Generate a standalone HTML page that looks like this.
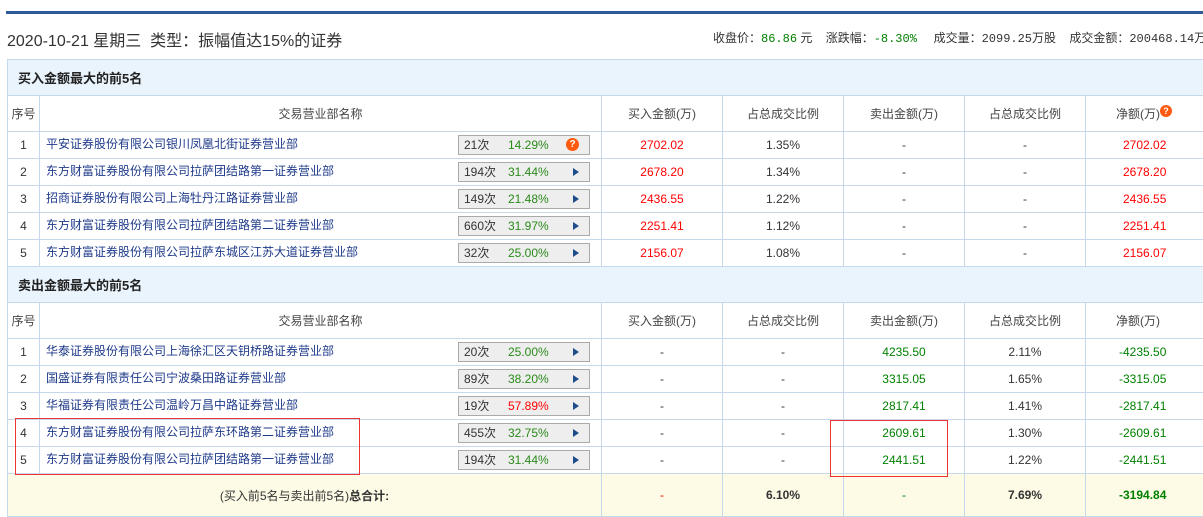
<!DOCTYPE html>
<html><head><meta charset="utf-8"><style>
body{margin:0;width:1203px;height:516px;overflow:hidden;background:#fff;font-family:"Liberation Sans","Noto Sans CJK SC",sans-serif;font-size:12px;color:#333;position:relative}
.topline{position:absolute;left:6px;top:11px;width:1197px;height:3px;background:#2f5a9a}
.title{position:absolute;left:7px;top:27px;font-size:16px;color:#333}
.info{position:absolute;left:713px;top:29px;font-size:12px;color:#333;white-space:nowrap}
.info b{font-weight:normal;color:#008000;font-family:"Liberation Mono",monospace}
.info i{font-style:normal;font-family:"Liberation Mono",monospace}
table{position:absolute;left:7px;border-collapse:collapse;table-layout:fixed;width:1210px}
td{border:1px solid #c5d9ea;text-align:center;padding:0;white-space:nowrap;overflow:hidden}
.sec td{background:#eaf4fd;text-align:left;font-weight:bold;font-size:13px;padding-left:10px;color:#222}
.hd td{height:35px;color:#444}
.r td{height:26px}
.nm{text-align:left;padding-left:6px;color:#1e3a8a;position:relative}
.nm .t{position:relative;top:-2px}
.btn{position:absolute;left:418px;top:3px;width:130px;height:18px;border:1px solid #aaa;background:#eee;color:#333;text-align:left;line-height:18px;font-size:12px}
.btn .c{display:inline-block;width:44px;padding-left:5px}
.btn .p{color:#2a8a1a}
.btn .a{position:absolute;right:10px;top:5px;width:0;height:0;border-left:6px solid #1e4d8a;border-top:4px solid transparent;border-bottom:4px solid transparent}
.btn .q{position:absolute;right:10px;top:2px;width:13px;height:13px;border-radius:50%;background:#ff5a0f;color:#fff;font-size:10px;font-weight:bold;text-align:center;line-height:13px}
.red{color:#f00}.grn{color:#008000}
.tot td{background:#fdfbe5;height:42px;color:#333}
.tot td.red{color:#f00}.tot td.grn{color:#008000}
</style></head><body>
<div class="topline"></div>
<div class="title">2020-10-21 星期三&nbsp; 类型：振幅值达15%的证券</div>
<div class="info">收盘价：<b>86.86</b> 元&nbsp;&nbsp;&nbsp; 涨跌幅：<b>-8.30%</b>&nbsp;&nbsp;&nbsp;&nbsp; 成交量：<i>2099.25</i>万股&nbsp;&nbsp;&nbsp; 成交金额：<i>200468.14</i>万元</div>
<table style="top:59px">
<colgroup><col style="width:32px"><col style="width:562px"><col style="width:121px"><col style="width:121px"><col style="width:121px"><col style="width:121px"><col style="width:132px"></colgroup>
<tr class="sec"><td colspan="7" style="height:35px">买入金额最大的前5名</td></tr>
<tr class="hd"><td>序号</td><td>交易营业部名称</td><td>买入金额(万)</td><td>占总成交比例</td><td>卖出金额(万)</td><td>占总成交比例</td><td style="text-align:left;padding-left:30px">净额(万)<span style="display:inline-block;width:12px;height:12px;border-radius:50%;background:#ff5a0f;color:#fff;font-size:9px;font-weight:bold;line-height:12px;text-align:center;vertical-align:top">?</span></td></tr>
<tr class="r"><td>1</td><td class="nm"><span class="t">平安证券股份有限公司银川凤凰北街证券营业部</span><div class="btn"><span class="c">21次</span><span class="p">14.29%</span><span class="q">?</span></div></td><td class="red">2702.02</td><td>1.35%</td><td>-</td><td>-</td><td class="red" style="text-align:left;padding-left:37px">2702.02</td></tr>
<tr class="r"><td>2</td><td class="nm"><span class="t">东方财富证券股份有限公司拉萨团结路第一证券营业部</span><div class="btn"><span class="c">194次</span><span class="p">31.44%</span><span class="a"></span></div></td><td class="red">2678.20</td><td>1.34%</td><td>-</td><td>-</td><td class="red" style="text-align:left;padding-left:37px">2678.20</td></tr>
<tr class="r"><td>3</td><td class="nm"><span class="t">招商证券股份有限公司上海牡丹江路证券营业部</span><div class="btn"><span class="c">149次</span><span class="p">21.48%</span><span class="a"></span></div></td><td class="red">2436.55</td><td>1.22%</td><td>-</td><td>-</td><td class="red" style="text-align:left;padding-left:37px">2436.55</td></tr>
<tr class="r"><td>4</td><td class="nm"><span class="t">东方财富证券股份有限公司拉萨团结路第二证券营业部</span><div class="btn"><span class="c">660次</span><span class="p">31.97%</span><span class="a"></span></div></td><td class="red">2251.41</td><td>1.12%</td><td>-</td><td>-</td><td class="red" style="text-align:left;padding-left:37px">2251.41</td></tr>
<tr class="r"><td>5</td><td class="nm"><span class="t">东方财富证券股份有限公司拉萨东城区江苏大道证券营业部</span><div class="btn"><span class="c">32次</span><span class="p">25.00%</span><span class="a"></span></div></td><td class="red">2156.07</td><td>1.08%</td><td>-</td><td>-</td><td class="red" style="text-align:left;padding-left:37px">2156.07</td></tr>
<tr class="sec"><td colspan="7" style="height:35px">卖出金额最大的前5名</td></tr>
<tr class="hd"><td>序号</td><td>交易营业部名称</td><td>买入金额(万)</td><td>占总成交比例</td><td>卖出金额(万)</td><td>占总成交比例</td><td style="text-align:left;padding-left:30px">净额(万)</td></tr>
<tr class="r"><td>1</td><td class="nm"><span class="t">华泰证券股份有限公司上海徐汇区天钥桥路证券营业部</span><div class="btn"><span class="c">20次</span><span class="p">25.00%</span><span class="a"></span></div></td><td>-</td><td>-</td><td class="grn">4235.50</td><td>2.11%</td><td class="grn" style="text-align:left;padding-left:33px">-4235.50</td></tr>
<tr class="r"><td>2</td><td class="nm"><span class="t">国盛证券有限责任公司宁波桑田路证券营业部</span><div class="btn"><span class="c">89次</span><span class="p">38.20%</span><span class="a"></span></div></td><td>-</td><td>-</td><td class="grn">3315.05</td><td>1.65%</td><td class="grn" style="text-align:left;padding-left:33px">-3315.05</td></tr>
<tr class="r"><td>3</td><td class="nm"><span class="t">华福证券有限责任公司温岭万昌中路证券营业部</span><div class="btn"><span class="c">19次</span><span class="p" style="color:#f00">57.89%</span><span class="a"></span></div></td><td>-</td><td>-</td><td class="grn">2817.41</td><td>1.41%</td><td class="grn" style="text-align:left;padding-left:33px">-2817.41</td></tr>
<tr class="r"><td>4</td><td class="nm"><span class="t">东方财富证券股份有限公司拉萨东环路第二证券营业部</span><div class="btn"><span class="c">455次</span><span class="p">32.75%</span><span class="a"></span></div></td><td>-</td><td>-</td><td class="grn">2609.61</td><td>1.30%</td><td class="grn" style="text-align:left;padding-left:33px">-2609.61</td></tr>
<tr class="r"><td>5</td><td class="nm"><span class="t">东方财富证券股份有限公司拉萨团结路第一证券营业部</span><div class="btn"><span class="c">194次</span><span class="p">31.44%</span><span class="a"></span></div></td><td>-</td><td>-</td><td class="grn">2441.51</td><td>1.22%</td><td class="grn" style="text-align:left;padding-left:33px">-2441.51</td></tr>
<tr class="tot"><td colspan="2">(买入前5名与卖出前5名)<b>总合计:</b></td><td class="red">-</td><td><b>6.10%</b></td><td class="grn">-</td><td><b>7.69%</b></td><td class="grn" style="text-align:left;padding-left:33px"><b>-3194.84</b></td></tr>
</table>
<div style="position:absolute;left:15px;top:418px;width:343px;height:55px;border:1px solid #e33"></div>
<div style="position:absolute;left:830px;top:420px;width:116px;height:55px;border:1px solid #e33"></div>
</body></html>
